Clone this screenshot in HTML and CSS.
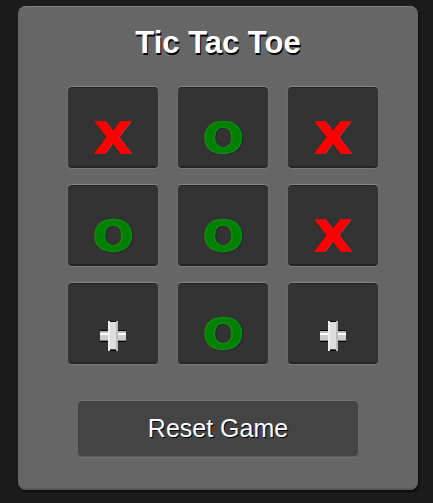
FILE: index.html
```html
<!DOCTYPE html>
<html>
<head>
<meta charset="utf-8">
<title>Tic Tac Toe</title>
<link rel="stylesheet" href="styles.css">
</head>
<body>
<div class="panel">
  <h1 class="title">Tic Tac Toe</h1>
  <div class="board">
    <div class="cell"><span class="mark x">X</span></div>
    <div class="cell"><span class="mark o">O</span></div>
    <div class="cell"><span class="mark x">X</span></div>
    <div class="cell"><span class="mark o">O</span></div>
    <div class="cell"><span class="mark o">O</span></div>
    <div class="cell"><span class="mark x">X</span></div>
    <div class="cell"><span class="plus" aria-label="empty"></span></div>
    <div class="cell"><span class="mark o">O</span></div>
    <div class="cell"><span class="plus" aria-label="empty"></span></div>
  </div>
  <button class="reset">Reset Game</button>
</div>
</body>
</html>
```
FILE: styles.css
```css
html, body {
  margin: 0;
  padding: 0;
  background: #1b1b1b;
}
body {
  font-family: "Liberation Sans", Arial, sans-serif;
  padding: 6px 0 0 18px;
  height: 503px;
  box-sizing: border-box;
}
.panel {
  width: 400px;
  height: 484px;
  box-sizing: border-box;
  background: #666;
  border-radius: 8px;
  border-top: 1px solid #808080;
  box-shadow: 1px 2px 2px rgba(0, 0, 0, 0.6), inset 0 -2px 0 #5a5a5a;
  padding: 18px 0 0 0;
  display: flex;
  flex-direction: column;
}
.title {
  margin: 0;
  text-align: center;
  font-size: 31px;
  line-height: 36px;
  font-weight: bold;
  color: #fff;
  text-shadow: 1px 2px 0 #000;
}
.board {
  margin: 26px 40px 0 50px;
  display: grid;
  grid-template-columns: repeat(3, 90px);
  grid-auto-rows: 81px;
  column-gap: 20px;
  row-gap: 17px;
}
.cell {
  background: #333;
  border-radius: 4px;
  border-top: 1px solid #222;
  border-bottom: 2px solid #242424;
  box-sizing: border-box;
  box-shadow: 0 -1px 1px #8a8a8a, 0 1px 1px #7a7a7a;
  display: flex;
  align-items: center;
  justify-content: center;
  padding-top: 21px;
}
.mark {
  font-family: "DejaVu Sans", sans-serif;
  font-weight: bold;
  font-size: 43px;
  line-height: 44px;
  display: inline-block;
  transform: scaleX(1.12);
}
.x {
  color: #f00;
  -webkit-text-stroke: 1.5px #f00;
  text-shadow: 0 0 1px #0d4d4d, 1px 1px 1px #0d4d4d;
}
.o {
  color: #008000;
  -webkit-text-stroke: 1.5px #0a8a0a;
  text-shadow: 0 0 1px #3a0a3a, 1px 1px 1px #3a0a3a;
}
.plus {
  position: relative;
  width: 26px;
  height: 30px;
  margin-top: 4px;
}
.plus::before,
.plus::after {
  content: "";
  position: absolute;
}
.plus::before {
  left: 0;
  top: 9px;
  width: 26px;
  height: 12px;
  background: linear-gradient(#000 0 1px, #bbb 1px 3px, #fff 3px 5px, #ccc 5px 10px, #888 10px 11px, #000 11px 12px);
}
.plus::after {
  left: 8px;
  top: 0;
  width: 10px;
  height: 30px;
  background: linear-gradient(#000 0 1px, #ddd 1px 28px, #555 28px 29px, #000 29px 30px);
  box-shadow: inset 2px 0 0 #eee, inset -2px 0 0 #bbb;
}
.reset {
  margin: 37px 60px 0 60px;
  height: 55px;
  background: #444;
  border: none;
  border-radius: 4px;
  box-shadow: 0 -1px 0 #737373, 0 1px 0 #5c5c5c, 0 2px 0 #707070;
  color: #fff;
  font-family: "Liberation Sans", Arial, sans-serif;
  font-size: 25px;
  text-shadow: 1px 1px 0 #000;
  padding: 0;
  cursor: pointer;
}
```
